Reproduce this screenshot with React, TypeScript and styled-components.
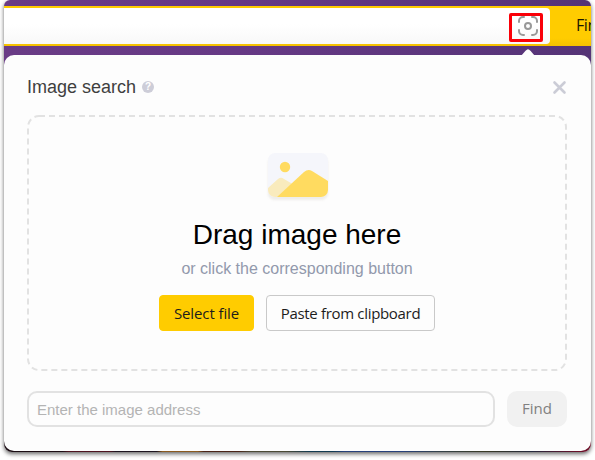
import React from "react";
import styled, { createGlobalStyle } from "styled-components";

const Global = createGlobalStyle`
  * { box-sizing: border-box; }
  body { margin: 0; background: #fff; overflow: hidden; font-family: "Liberation Sans", Arial, sans-serif; }
  button, input { font-family: inherit; }
`;
const Page = styled.main`
  width: 595px;
  height: 460px;
  padding: 0 4px;
`;
const Frame = styled.section`
  width: 587px;
  height: 452px;
  padding-top: 6px;
  border-radius: 6px 6px 8px 8px;
  overflow: hidden;
  background: linear-gradient(90deg, #6a3c86 0, #663985 40%, #553477 100%) top / 100% 100px no-repeat,
    linear-gradient(90deg, #1b0d14 0 10%, #4d1420 11% 18%, #1d1520 19% 26%, #8a5a20 27% 33%, #4a2418 34% 40%, #4b4a35 42% 48%, #123a50 52% 56%, #27407a 58% 68%, #34424a 74%, #3a3a25 82%, #24293d 90%, #6b0f28 98%);
`;
const Shadow = styled.div`
  border-radius: 6px 6px 8px 8px;
  height: 452px;
  box-shadow: 0 2px 4px rgba(0, 0, 0, 0.6);
`;
const SearchBar = styled.header`
  height: 40px;
  padding: 2px 0;
  display: flex;
  background: linear-gradient(#ffcc00 80%, #f4c000);
`;
const Query = styled.div`
  flex: none;
  width: 546px;
  height: 36px;
  display: flex;
  justify-content: flex-end;
  padding: 5px 7px 0 0;
  border-radius: 0 4px 4px 0;
  background: linear-gradient(#fff 45%, #f8f8f8);
`;
const CameraButton = styled.button`
  width: 34px;
  height: 29px;
  padding: 0 0 3px 4px;
  display: grid;
  place-items: center;
  border: 3px solid #fa0008;
  border-radius: 2px;
  background: transparent;
`;
const TopFind = styled.span`
  padding-left: 26px;
  font: 16px/34px "Open Sans", sans-serif;
  letter-spacing: -0.4px;
  white-space: nowrap;
  color: #1b1600;
`;
const Popup = styled.div`
  position: relative;
  height: 396px;
  margin-top: 9px;
  padding: 22px 24px 24px 23px;
  display: flex;
  flex-direction: column;
  border-radius: 10px;
  background: #fdfdfd;
`;
const Tail = styled.svg`
  position: absolute;
  left: 515px;
  top: -6px;
`;
const TitleRow = styled.div`
  height: 20px;
  display: flex;
  align-items: center;
`;
const Title = styled.h1`
  margin: 0 6px 0 0;
  font-size: 18px;
  line-height: 20px;
  font-weight: 400;
  color: #3f3f3f;
`;
const Help = styled.span`
  width: 12px;
  height: 12px;
  border-radius: 50%;
  background: #cdcdd8;
  color: #fff;
  font-size: 10px;
  line-height: 12px;
  font-weight: 700;
  text-align: center;
`;
const Close = styled.svg`
  margin-left: auto;
`;
const DropZone = styled.div`
  position: relative;
  height: 256px;
  margin-top: 18px;
  padding-top: 38px;
  display: flex;
  flex-direction: column;
  align-items: center;
`;
const Outline = styled.svg`
  position: absolute;
  inset: 0;
`;
const Picture = styled.svg`
  display: block;
  overflow: visible;
  margin-left: 1px;
  filter: drop-shadow(0 3px 1px rgba(90, 80, 50, 0.09));
`;
const Heading = styled.h2`
  margin: 21px 0 0;
  font-size: 28px;
  line-height: 34px;
  font-weight: 400;
  color: #000;
`;
const Hint = styled.p`
  margin: 7px 0 0;
  font-size: 16px;
  line-height: 20px;
  color: #9299ac;
`;
const Actions = styled.div`
  display: flex;
  gap: 12px;
  margin-top: 16px;
`;
const Action = styled.button<{ $primary?: boolean }>`
  width: ${(p) => (p.$primary ? 95 : 169)}px;
  height: 36px;
  padding: 0 0 1px;
  border: 1px solid ${(p) => (p.$primary ? "#ffcc00" : "#c9c9c9")};
  border-radius: 4px;
  background: ${(p) => (p.$primary ? "#ffcc00" : "#fdfdfd")};
  font: 15px "Open Sans", sans-serif;
  letter-spacing: ${(p) => (p.$primary ? -0.1 : -0.32)}px;
  white-space: nowrap;
  color: #1c1c1c;
`;
const AddressRow = styled.div`
  display: flex;
  gap: 12px;
  margin-top: 20px;
`;
const Address = styled.input`
  width: 468px;
  height: 36px;
  padding: 0 8px;
  border: 2px solid #e2e2e2;
  border-radius: 10px;
  background: #fdfdfd;
  font-size: 15px;
  &::placeholder { color: #b4b4b4; opacity: 1; }
`;
const FindButton = styled.button`
  width: 60px;
  height: 36px;
  padding: 0 0 2px;
  border: 0;
  border-radius: 10px;
  background: #f1f1f1;
  color: #808080;
  font: 15px "Open Sans", sans-serif;
`;

const CameraIcon = () => (
  <svg width="20" height="20" viewBox="0 0 20 20" fill="none" stroke="#999" strokeWidth="2" strokeLinecap="round">
    <circle cx="10" cy="10" r="3" />
    <path d="M1 6V5a4 4 0 0 1 4-4h1M14 1h1a4 4 0 0 1 4 4v1M19 14v1a4 4 0 0 1-4 4h-1M6 19H5a4 4 0 0 1-4-4v-1" />
  </svg>
);

const App = () => (
  <>
    <Global />
    <Page>
      <Shadow>
        <Frame>
          <SearchBar>
            <Query>
              <CameraButton aria-label="Image search"><CameraIcon /></CameraButton>
            </Query>
            <TopFind>Find</TopFind>
          </SearchBar>
          <Popup>
            <Tail width="18" height="7" viewBox="0 0 18 7">
              <path d="M0 7C3 7 4 4 7.500 1Q9-.5 10.500 1C14 4 15 7 18 7Z" fill="#fdfdfd" />
            </Tail>
            <TitleRow>
              <Title>Image search</Title>
              <Help>?</Help>
              <Close width="15" height="15" viewBox="0 0 15 15">
                <path d="M2.500 2.500l10 10M12.500 2.500l-10 10" stroke="#cbccd6" strokeWidth="2.600" strokeLinecap="round" />
              </Close>
            </TitleRow>
            <DropZone>
              <Outline width="540" height="256">
                <rect x="1" y="1" width="538" height="254" rx="11" fill="none" stroke="#e2e2e2" strokeWidth="2" strokeDasharray="6 4" />
              </Outline>
              <Picture width="60" height="44" viewBox="0 0 60 44">
                <defs>
                  <clipPath id="card"><rect width="60" height="44" rx="7" /></clipPath>
                </defs>
                <g clipPath="url(#card)">
                  <rect width="60" height="44" fill="#f5f6fb" />
                  <circle cx="17" cy="14" r="5.200" fill="#ffdb60" />
                  <path d="M0 35L10 26Q13 23.500 16 26L28 33V44H0Z" fill="#f9ebbd" />
                  <path d="M9 44L36 19Q40 15.500 44 18L60 28V44Z" fill="#ffdb60" />
                </g>
              </Picture>
              <Heading>Drag image here</Heading>
              <Hint>or click the corresponding button</Hint>
              <Actions>
                <Action $primary>Select file</Action>
                <Action>Paste from clipboard</Action>
              </Actions>
            </DropZone>
            <AddressRow>
              <Address placeholder="Enter the image address" />
              <FindButton>Find</FindButton>
            </AddressRow>
          </Popup>
        </Frame>
      </Shadow>
    </Page>
  </>
);

export default App;
